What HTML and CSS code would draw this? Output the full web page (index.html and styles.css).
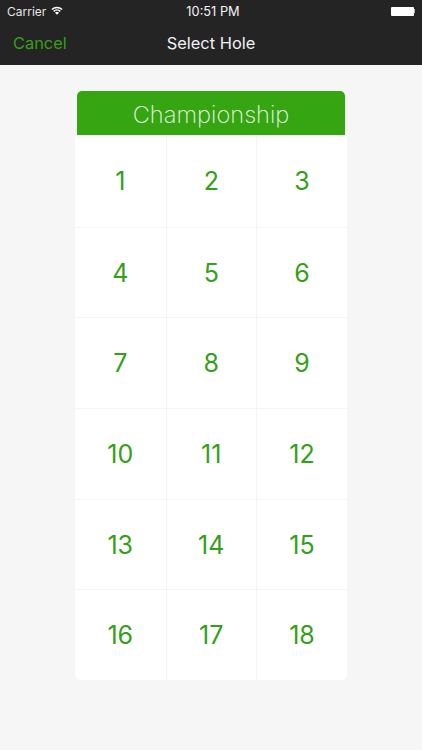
FILE: index.html
```html
<!DOCTYPE html>
<html lang="en">
<head>
    <meta charset="UTF-8">
    <meta name="viewport" content="width=device-width, initial-scale=1.0">
    <title>Select Hole</title>
    <link rel="stylesheet" href="styles.css">
</head>
<body>
    <div class="top-bar">
        <div class="status-bar">
            <div class="status-left">
                <span>Carrier</span>
                <svg class="wifi" width="12" height="9" viewBox="0 0 13 10">
                    <path d="M0.3 3.3A9 9 0 0 1 12.7 3.3L11.6 4.5A7.4 7.4 0 0 0 1.4 4.5Z" fill="#fff"/>
                    <path d="M2.3 5.4A6.1 6.1 0 0 1 10.7 5.4L9.6 6.6A4.5 4.5 0 0 0 3.4 6.6Z" fill="#fff"/>
                    <path d="M4.3 7.4A3.2 3.2 0 0 1 8.7 7.4L6.5 9.8Z" fill="#fff"/>
                </svg>
            </div>
            <div class="status-time">10:51 PM</div>
            <div class="status-right">
                <div class="battery"></div>
                <div class="battery-tip"></div>
            </div>
        </div>
        <div class="nav-bar">
            <div class="nav-cancel">Cancel</div>
            <div class="nav-title">Select Hole</div>
            <div></div>
        </div>
    </div>
    <div class="content">
        <div class="hole-card">
            <div class="card-title">Championship</div>
            <div class="hole-grid">
                <div class="hole">1</div>
                <div class="hole">2</div>
                <div class="hole">3</div>
                <div class="hole">4</div>
                <div class="hole">5</div>
                <div class="hole">6</div>
                <div class="hole">7</div>
                <div class="hole">8</div>
                <div class="hole">9</div>
                <div class="hole">10</div>
                <div class="hole">11</div>
                <div class="hole">12</div>
                <div class="hole">13</div>
                <div class="hole">14</div>
                <div class="hole">15</div>
                <div class="hole">16</div>
                <div class="hole">17</div>
                <div class="hole">18</div>
            </div>
        </div>
    </div>
</body>
</html>
```

FILE: styles.css
```css
html, body {
    height: 100%;
}
body {
    font-family: Inter, "Liberation Sans", sans-serif;
    margin: 0;
    background-color: #f6f6f6;
    overflow: hidden;
}
.top-bar {
    height: 65px;
    background-color: #242424;
    color: #fff;
    box-sizing: border-box;
    padding: 0 7px;
}
.status-bar {
    height: 22px;
    display: grid;
    grid-template-columns: 1fr auto 1fr;
    align-items: center;
    font-size: 12px;
}
.status-left {
    display: flex;
    align-items: center;
    gap: 5px;
    color: #e6e6e6;
}
.wifi {
    margin-top: -1px;
}
.status-time {
    font-size: 12.8px;
    color: #f4f4f4;
    margin-left: 4px;
}
.status-right {
    display: flex;
    justify-content: flex-end;
    align-items: center;
}
.battery {
    width: 23px;
    height: 9px;
    background: #fff;
    border-radius: 1px;
}
.battery-tip {
    width: 1.5px;
    height: 4px;
    background: #bbb;
}
.nav-bar {
    display: grid;
    grid-template-columns: 1fr auto 1fr;
    align-items: center;
    height: 42px;
    font-size: 16.4px;
    padding-left: 6px;
}
.nav-cancel {
    color: #35a016;
}
.nav-title {
    color: #f2f2f2;
    margin-left: -6px;
}
.content {
    display: flex;
    justify-content: center;
    padding-top: 26px;
}
.hole-card {
    width: 272px;
    display: flex;
    flex-direction: column;
    align-items: center;
}
.card-title {
    width: 268px;
    height: 44px;
    line-height: 47px;
    margin-bottom: 1px;
    background-color: #36a512;
    color: #e8f5e2;
    border-radius: 5px 5px 0 0;
    text-align: center;
    font-size: 23.7px;
    font-weight: 200;
}
.hole-grid {
    width: 272px;
    display: grid;
    grid-template-columns: 90.5px 90.5px 91px;
    grid-auto-rows: 90.7px;
    background: #fff;
    border-radius: 0 0 6px 6px;
    overflow: hidden;
}
.hole {
    display: flex;
    justify-content: center;
    align-items: center;
    color: #33a018;
    font-size: 25px;
    border-left: 1px solid #f4f4f4;
    border-top: 1px solid #f4f4f4;
}
.hole:nth-child(3n+1) {
    border-left: none;
}
.hole:nth-child(-n+3) {
    border-top: none;
}
```
